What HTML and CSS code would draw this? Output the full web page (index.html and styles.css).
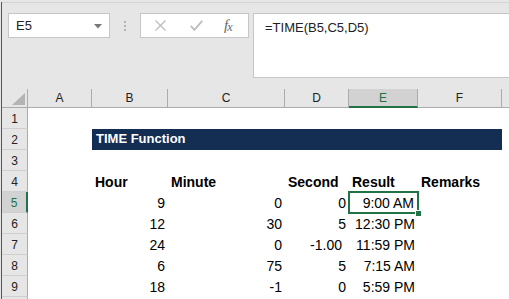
FILE: index.html
```html
<!DOCTYPE html>
<html lang="en">
<head>
    <meta charset="UTF-8">
    <title>TIME Function</title>
    <link rel="stylesheet" href="styles.css">
</head>
<body>
    <div class="window">
        <!-- formula bar -->
        <div class="topbar">
            <div class="namebox">
                <span>E5</span>
                <svg class="drop" width="8" height="5" viewBox="0 0 8 5"><path d="M0 0h8L4 4.5z" fill="#777"/></svg>
            </div>
            <div class="grip"><i></i><i></i><i></i></div>
            <div class="fxbox">
                <svg width="11" height="11" viewBox="0 0 11 11"><path d="M0.5 0.5l10 10M10.5 0.5l-10 10" stroke="#bdbdbd" stroke-width="1.3" fill="none"/></svg>
                <svg width="13" height="11" viewBox="0 0 13 11"><path d="M0.8 5.8l3.6 4L12.2 0.8" stroke="#bdbdbd" stroke-width="1.8" fill="none"/></svg>
                <span class="fx">f<span class="fx-x">x</span></span>
            </div>
            <div class="formula">=TIME(B5,C5,D5)</div>
        </div>

        <!-- sheet -->
        <div class="sheet">
            <div class="ch corner"></div>
            <div class="ch">A</div>
            <div class="ch">B</div>
            <div class="ch">C</div>
            <div class="ch">D</div>
            <div class="ch active">E</div>
            <div class="ch">F</div>
            <div class="ch last"></div>

            <div class="rh">1</div>
            <div class="c"></div><div class="c"></div><div class="c"></div><div class="c"></div><div class="c"></div><div class="c"></div><div class="c"></div>

            <div class="rh">2</div>
            <div class="c"></div>
            <div class="c banner">TIME Function</div>
            <div class="c"></div>

            <div class="rh">3</div>
            <div class="c"></div><div class="c"></div><div class="c"></div><div class="c"></div><div class="c"></div><div class="c"></div><div class="c"></div>

            <div class="rh">4</div>
            <div class="c"></div>
            <div class="c head">Hour</div>
            <div class="c head">Minute</div>
            <div class="c head">Second</div>
            <div class="c head">Result</div>
            <div class="c head">Remarks</div>
            <div class="c"></div>

            <div class="rh active">5</div>
            <div class="c"></div>
            <div class="c num">9</div>
            <div class="c num">0</div>
            <div class="c num">0</div>
            <div class="c num selected">9:00 AM<span class="handle"></span></div>
            <div class="c"></div><div class="c"></div>

            <div class="rh">6</div>
            <div class="c"></div>
            <div class="c num">12</div>
            <div class="c num">30</div>
            <div class="c num">5</div>
            <div class="c num">12:30 PM</div>
            <div class="c"></div><div class="c"></div>

            <div class="rh">7</div>
            <div class="c"></div>
            <div class="c num">24</div>
            <div class="c num">0</div>
            <div class="c num dec">-1.00</div>
            <div class="c num">11:59 PM</div>
            <div class="c"></div><div class="c"></div>

            <div class="rh">8</div>
            <div class="c"></div>
            <div class="c num">6</div>
            <div class="c num">75</div>
            <div class="c num">5</div>
            <div class="c num">7:15 AM</div>
            <div class="c"></div><div class="c"></div>

            <div class="rh">9</div>
            <div class="c"></div>
            <div class="c num">18</div>
            <div class="c num">-1</div>
            <div class="c num">0</div>
            <div class="c num">5:59 PM</div>
            <div class="c"></div><div class="c"></div>

            <div class="rh"></div>
            <div class="c"></div><div class="c"></div><div class="c"></div><div class="c"></div><div class="c"></div><div class="c"></div><div class="c"></div>
        </div>
    </div>
</body>
</html>
```

FILE: styles.css
```css
:root {
    --chrome: #e6e6e6;
    --line: #c6c6c6;
    --header-line: #ababab;
    --green: #217346;
    --navy: #142d53;
}

* {
    margin: 0;
    padding: 0;
    box-sizing: border-box;
}

html, body {
    height: 100%;
    overflow: hidden;
}

body {
    background-color: var(--chrome);
    font-family: 'Liberation Sans', Arial, sans-serif;
    color: #000;
}

.window {
    margin-left: 1px;
    border-left: 1px solid var(--green);
    height: 100%;
}

/* 公式栏 */
.topbar {
    margin-top: 2px;
    border-top: 1px solid #d4d4d4;
    height: 87px;
    padding-top: 10px;
    display: flex;
    align-items: flex-start;
}

.namebox {
    margin-left: 6px;
    width: 102px;
    height: 25px;
    background-color: #fff;
    border: 1px solid var(--line);
    display: flex;
    align-items: center;
    justify-content: space-between;
    padding: 0 7px 0 7px;
    font-size: 13px;
    color: #222;
}

.drop {
    margin-top: 1px;
}

.grip {
    width: 30px;
    height: 25px;
    display: flex;
    flex-direction: column;
    align-items: center;
    justify-content: center;
    gap: 2px;
}

.grip i {
    width: 2px;
    height: 2px;
    background-color: #b4b4b4;
}

.fxbox {
    width: 109px;
    height: 25px;
    background-color: #fff;
    border: 1px solid var(--line);
    display: flex;
    align-items: center;
    padding-left: 14px;
    gap: 24px;
}

.fx {
    font-family: 'Liberation Serif', serif;
    font-style: italic;
    font-size: 15px;
    color: #666;
    margin-left: -3px;
    line-height: 1;
}

.fx-x {
    font-size: 12px;
    position: relative;
    top: 1px;
    margin-left: -1px;
}

.formula {
    flex: 1;
    margin-left: 4px;
    margin-right: -1px;
    height: 65px;
    background-color: #fff;
    border: 1px solid var(--line);
    padding: 6px 0 0 11px;
    font-size: 13px;
    color: #222;
}

/* 表格 */
.sheet {
    display: grid;
    grid-template-columns: 26px 64px 76px 117px 64px 69px 84px 1fr;
    grid-template-rows: 19px;
    grid-auto-rows: 21px;
    background-color: #fff;
}

.ch {
    background-color: var(--chrome);
    border-right: 1px solid var(--header-line);
    border-bottom: 1px solid var(--header-line);
    font-size: 12px;
    color: #222;
    display: flex;
    align-items: center;
    justify-content: center;
}

.ch.last {
    border-right: none;
}

.ch.corner {
    position: relative;
}

.ch.corner::after {
    content: '';
    position: absolute;
    right: 2px;
    bottom: 2px;
    border-style: solid;
    border-width: 0 0 12px 13px;
    border-color: transparent transparent #b4b4b4 transparent;
}

.ch.active {
    background-color: #d2d2d2;
    border-bottom: 2px solid var(--green);
    color: var(--green);
}

.rh {
    background-color: var(--chrome);
    border-right: 1px solid var(--header-line);
    border-bottom: 1px solid #cfcfcf;
    font-size: 12px;
    color: #222;
    display: flex;
    align-items: center;
    justify-content: center;
    padding-top: 2px;
}

.rh.active {
    background-color: #d2d2d2;
    border-right: 2px solid var(--green);
    color: var(--green);
}

.c {
    font-size: 14px;
    display: flex;
    align-items: flex-end;
    padding: 0 3px 2px 3px;
    line-height: 16px;
    white-space: nowrap;
}

.banner {
    grid-column: span 5;
    background-color: var(--navy);
    color: #fff;
    font-weight: bold;
    font-size: 13px;
    padding-left: 4px;
    padding-bottom: 3px;
}

.head {
    font-weight: bold;
}

.num {
    justify-content: flex-end;
}

.num.dec {
    padding-right: 7px;
}

.selected {
    position: relative;
    outline: 2px solid var(--green);
    outline-offset: -1px;
    padding-right: 4px;
}

.handle {
    position: absolute;
    right: -3px;
    bottom: -3px;
    width: 5px;
    height: 5px;
    background-color: var(--green);
    border: 1px solid #fff;
    box-sizing: content-box;
    margin: -1px;
}
```
